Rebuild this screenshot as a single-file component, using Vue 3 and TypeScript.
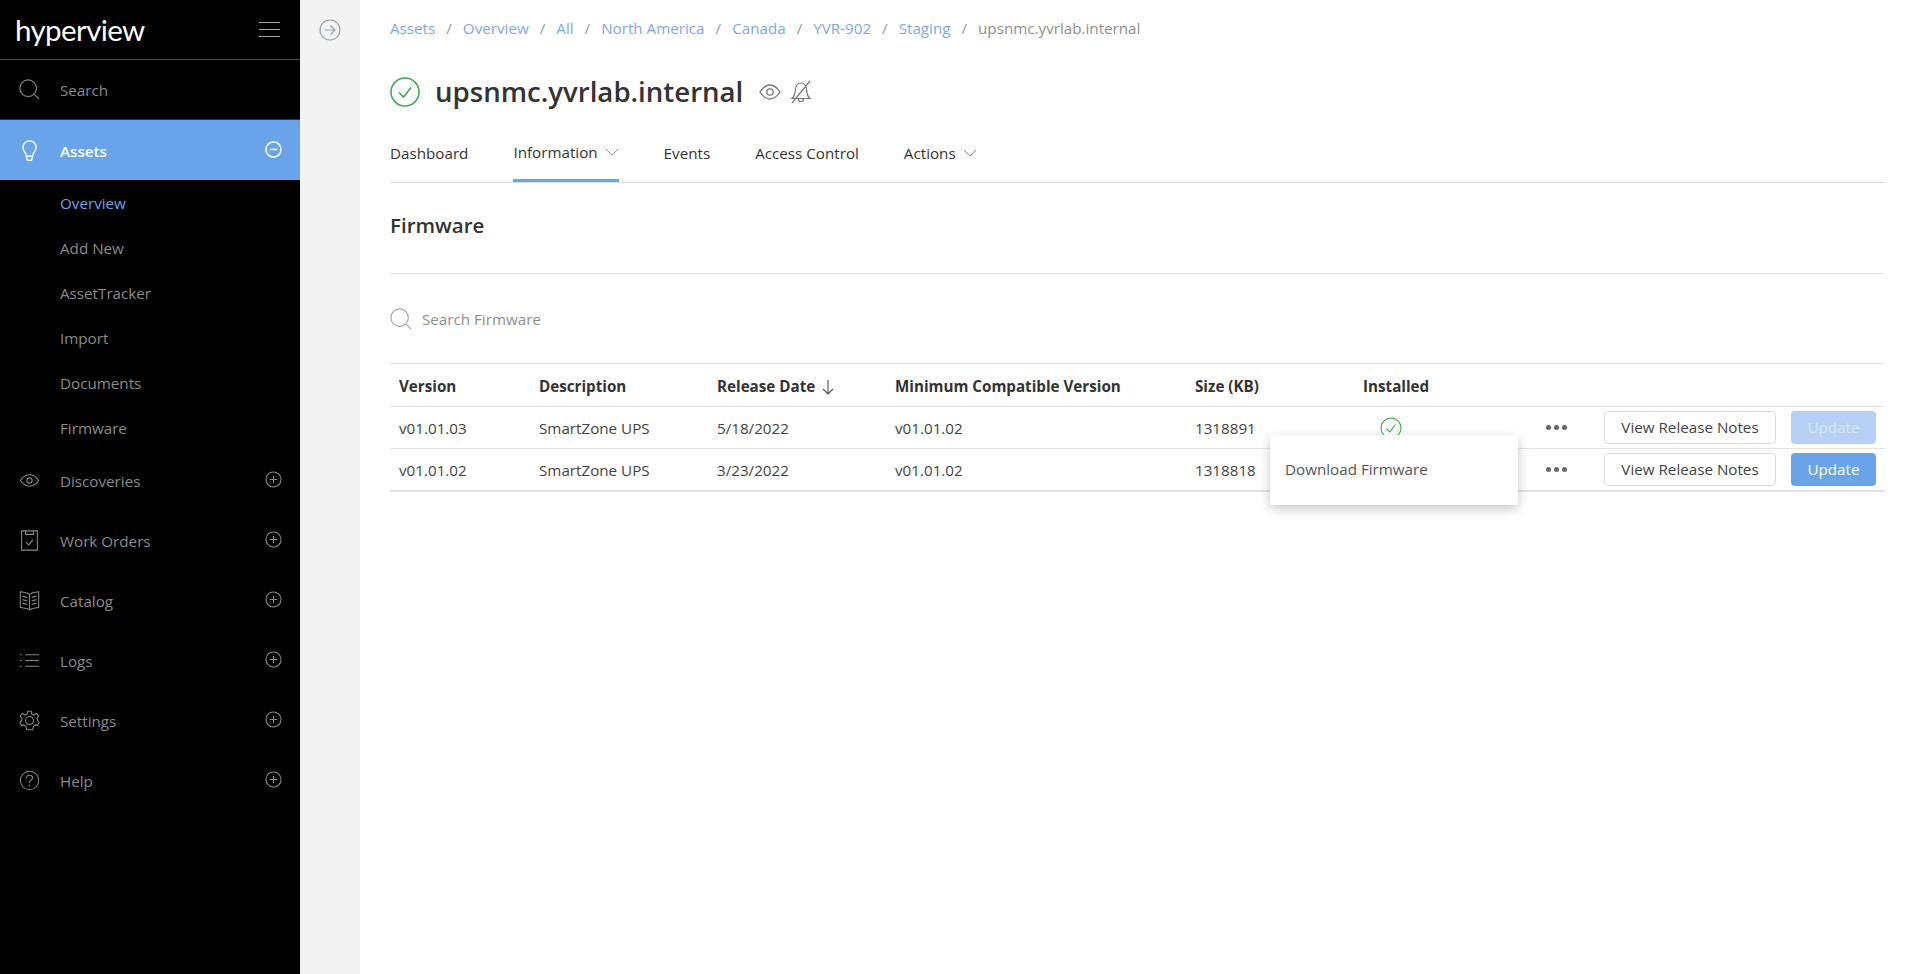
<template>
  <div class="page">
    <aside class="sidebar">
      <div class="logo-row">
        <span class="logo">hyperview</span>
        <div class="burger"><i></i><i></i><i></i></div>
      </div>
      <div class="search-row">
        <svg class="nav-icon" viewBox="0 0 24 24"><circle cx="10.5" cy="10.5" r="9.5" /><path d="M17.5 17.5 L23 23" /></svg>
        <span>Search</span>
      </div>
      <div class="nav-item active">
        <svg class="nav-icon" viewBox="0 0 24 24">
          <path d="M8.5 18.5 C8.5 14.5 4.5 13 4.5 8.5 A7.5 7.5 0 0 1 19.5 8.5 C19.5 13 15.5 14.5 15.5 18.5 Z" />
          <path d="M9 19 V21 A3 2.5 0 0 0 15 21 V19" />
        </svg>
        <span class="nav-label">Assets</span>
        <svg class="pm" viewBox="0 0 18 18"><circle cx="9" cy="9" r="8" /><path d="M5 9 H13" /></svg>
      </div>
      <ul class="sub-nav">
        <li v-for="(s, i) in subItems" :key="s" :class="{ current: i === 0 }">{{ s }}</li>
      </ul>
      <div v-for="item in navItems" :key="item.label" class="nav-item">
        <svg class="nav-icon" viewBox="0 0 24 24">
          <path v-for="d in item.paths" :key="d" :d="d" />
        </svg>
        <span class="nav-label">{{ item.label }}</span>
        <svg class="pm" viewBox="0 0 18 18"><circle cx="9" cy="9" r="8" /><path d="M5 9 H13 M9 5 V13" /></svg>
      </div>
    </aside>

    <div class="strip">
      <svg class="expand" viewBox="0 0 22 22"><circle cx="11" cy="11" r="10" /><path d="M5.5 11 H16 M11.5 6.5 L16 11 L11.5 15.5" /></svg>
    </div>

    <main class="content">
      <nav class="crumbs">
        <template v-for="c in crumbs" :key="c">
          <a>{{ c }}</a><span class="sep">/</span>
        </template>
        <span class="crumb-last">upsnmc.yvrlab.internal</span>
      </nav>

      <div class="title-row">
        <svg class="status" viewBox="0 0 30 30"><circle cx="15" cy="15" r="14" /><path d="M9 15.5 L13.5 20 L21 10.5" /></svg>
        <h1>upsnmc.yvrlab.internal</h1>
        <svg class="t-eye" viewBox="0 0 22 16"><path d="M1 8 C5 2 8 1 11 1 C14 1 17 2 21 8 C17 14 14 15 11 15 C8 15 5 14 1 8 Z" /><circle cx="11" cy="8" r="3.2" /></svg>
        <svg class="t-bell" viewBox="0 0 22 24">
          <path d="M2 18.5 C5 16 5 13 5.5 9 C6 5 8.5 3 11 3 C13.5 3 16 5 16.5 9 C17 13 17 16 20 18.5 Z" />
          <path d="M8.5 19 A2.5 2.5 0 0 0 13.5 19 M2 23 L20 1" />
        </svg>
      </div>

      <div class="tabs">
        <div v-for="t in tabs" :key="t.label" class="tab" :class="{ on: t.on }">
          {{ t.label }}
          <svg v-if="t.menu" class="chev" viewBox="0 0 14 8"><path d="M1 1 L7 7 L13 1" /></svg>
        </div>
      </div>

      <h2>Firmware</h2>

      <div class="fw-search">
        <svg viewBox="0 0 24 24"><circle cx="10.5" cy="10.5" r="9.5" /><path d="M17.5 17.5 L23 23" /></svg>
        <span>Search Firmware</span>
      </div>

      <div class="table-wrap">
        <table>
          <thead>
            <tr>
              <th class="c1">Version</th>
              <th class="c2">Description</th>
              <th class="c3">
                Release Date
                <svg class="sort" viewBox="0 0 12 16"><path d="M6 1 V15 M1 10 L6 15 L11 10" /></svg>
              </th>
              <th class="c4">Minimum Compatible Version</th>
              <th class="c5">Size (KB)</th>
              <th class="c6">Installed</th>
              <th></th>
            </tr>
          </thead>
          <tbody>
            <tr v-for="r in rows" :key="r.version">
              <td>{{ r.version }}</td>
              <td>SmartZone UPS</td>
              <td>{{ r.date }}</td>
              <td>v01.01.02</td>
              <td>{{ r.size }}</td>
              <td>
                <svg v-if="r.installed" class="ok" viewBox="0 0 22 22"><circle cx="11" cy="11" r="10" /><path d="M6.5 11.5 L9.8 14.8 L15.5 7.5" /></svg>
              </td>
              <td>
                <div class="actions">
                  <span class="dots"><i></i><i></i><i></i></span>
                  <button class="btn-notes">View Release Notes</button>
                  <button class="btn-update" :class="{ off: r.installed }">Update</button>
                </div>
              </td>
            </tr>
          </tbody>
        </table>
        <div class="popup">Download Firmware</div>
      </div>
    </main>
  </div>
</template>

<script setup lang="ts">
const subItems = ['Overview', 'Add New', 'AssetTracker', 'Import', 'Documents', 'Firmware']

const navItems: { label: string; paths: string[] }[] = [
  {
    label: 'Discoveries',
    paths: [
      'M1.5 12 C5 7 9 5.5 12 5.5 C15 5.5 19 7 22.5 12 C19 17 15 18.5 12 18.5 C9 18.5 5 17 1.5 12 Z',
      'M12 9 A3 3 0 1 0 12 15 A3 3 0 1 0 12 9 Z',
    ],
  },
  {
    label: 'Work Orders',
    paths: [
      'M3 1 H21 V23 H3 Z',
      'M7.5 1 V5 H16.5 V1',
      'M8 14 L11 17 L16 11',
    ],
  },
  {
    label: 'Catalog',
    paths: [
      'M12 5 C9 3 5 2.5 1.5 2 V20 C5 20.5 9 21 12 22.5 C15 21 19 20.5 22.5 20 V2 C19 2.5 15 3 12 5 Z',
      'M12 5 V22.5',
      'M4 7 L9.5 8.5 M4 11 L9.5 12.5 M4 15 L9.5 16.5',
      'M20 7 L14.5 8.5 M20 11 L14.5 12.5 M20 15 L14.5 16.5',
    ],
  },
  {
    label: 'Logs',
    paths: [
      'M7 5.5 H23 M7 12 H23 M7 18.5 H23',
      'M1 5.5 H3 M1 12 H3 M1 18.5 H3',
    ],
  },
  {
    label: 'Settings',
    paths: [
      'M10 1.5 H14 L14.7 4.7 L17.2 5.8 L20 4 L22.6 7 L20.5 9.5 L21.2 12 L23 14 L21 17.5 L18.2 17 L16.5 19 L15.5 22.5 H9 L7.8 19 L5.5 17 L2.8 17.8 L1 14 L3.2 12 L3.2 9.5 L1.2 7 L4 4 L6.8 5.8 L9.3 4.7 Z',
      'M12 7.5 A4.5 4.5 0 1 0 12 16.5 A4.5 4.5 0 1 0 12 7.5 Z',
    ],
  },
  {
    label: 'Help',
    paths: [
      'M12 1.5 A10.5 10.5 0 1 0 12 22.5 A10.5 10.5 0 1 0 12 1.5 Z',
      'M8.5 9.5 C8.5 7 10 6 12 6 C14 6 15.5 7.2 15.5 9 C15.5 11.5 12 11.5 12 14.5',
      'M12 17 V18.2',
    ],
  },
]

const crumbs = ['Assets', 'Overview', 'All', 'North America', 'Canada', 'YVR-902', 'Staging']

const tabs = [
  { label: 'Dashboard', menu: false, on: false },
  { label: 'Information', menu: true, on: true },
  { label: 'Events', menu: false, on: false },
  { label: 'Access Control', menu: false, on: false },
  { label: 'Actions', menu: true, on: false },
]

const rows = [
  { version: 'v01.01.03', date: '5/18/2022', size: '1318891', installed: true },
  { version: 'v01.01.02', date: '3/23/2022', size: '1318818', installed: false },
]
</script>

<style>
html, body { margin: 0; background: #fff; }
</style>

<style scoped>
.page {
  display: flex;
  height: 974px;
  overflow: hidden;
  font-family: "Open Sans", "Noto Sans", sans-serif;
  font-size: 15.2px;
  color: #333;
}
.sidebar {
  width: 300px;
  flex: none;
  background: #000;
  color: #8a8a8a;
}
.logo-row {
  height: 59px;
  border-bottom: 1px solid #4a4a4a;
  display: flex;
  align-items: center;
  justify-content: space-between;
  padding: 0 20px 0 15px;
}
.logo {
  font-family: Lato, sans-serif;
  font-size: 29.5px;
  font-weight: 400;
  letter-spacing: -0.6px;
  color: #fff;
  line-height: 59px;
}
.burger {
  width: 21px;
  display: flex;
  flex-direction: column;
  gap: 6px;
}
.burger i {
  height: 1px;
  background: #aaa;
}
.search-row {
  height: 59px;
  border-bottom: 1px solid #333;
  display: flex;
  align-items: center;
  padding-left: 19px;
}
.nav-icon {
  width: 21px;
  height: 21px;
  flex: none;
  margin-right: 20px;
  fill: none;
  stroke: #8a8a8a;
  stroke-width: 1.2;
}
.nav-item {
  height: 60px;
  display: flex;
  align-items: center;
  padding: 0 18px 0 19px;
}
.nav-label {
  flex: 1;
  padding-top: 2px;
}
.pm {
  width: 17px;
  height: 17px;
  fill: none;
  stroke: #8a8a8a;
  stroke-width: 1.1;
  margin-top: -2px;
}
.nav-item.active {
  background: #69a3ea;
  color: #fff;
  font-weight: 600;
}
.nav-item.active .nav-icon,
.nav-item.active .pm {
  stroke: #fff;
  stroke-width: 1.6;
}
.sub-nav {
  list-style: none;
  margin: 0;
  padding: 0 0 0 60px;
  height: 270px;
}
.sub-nav li {
  height: 45px;
  line-height: 47px;
}
.sub-nav li.current { color: #69a3ea; }
.strip {
  width: 60px;
  flex: none;
  background: #f3f3f3;
  display: flex;
  justify-content: center;
  padding-top: 19px;
  box-sizing: border-box;
}
.expand {
  width: 22px;
  height: 22px;
  fill: none;
  stroke: #9aa3b0;
  stroke-width: 1.2;
}
.content {
  flex: 1;
  min-width: 0;
  padding: 0 27px 0 30px;
}
.crumbs {
  height: 56px;
  display: flex;
  align-items: center;
  color: #8f8f8f;
}
.crumbs a { color: #7fa8ea; }
.sep { margin: 0 11px; color: #999; }
.crumb-last { color: #8f8f8f; }
.title-row {
  height: 72px;
  display: flex;
  align-items: center;
}
.status {
  width: 30px;
  height: 30px;
  flex: none;
  fill: none;
  stroke: #3daa4e;
  stroke-width: 1.5;
  margin-right: 15px;
}
h1 {
  margin: -2px 0 0;
  font-size: 27.6px;
  font-weight: 600;
  color: #333;
}
.t-eye {
  width: 22px;
  height: 16px;
  margin-left: 16px;
  fill: none;
  stroke: #777;
  stroke-width: 1.3;
}
.t-bell {
  width: 22px;
  height: 24px;
  margin-left: 9px;
  fill: none;
  stroke: #777;
  stroke-width: 1.2;
}
.tabs {
  height: 54px;
  display: flex;
  gap: 45px;
  border-bottom: 1px solid #ddd;
}
.tab {
  height: 54px;
  box-sizing: border-box;
  display: flex;
  align-items: center;
  gap: 7px;
  padding-bottom: 4px;
  color: #333;
}
.tab.on {
  border-bottom: 3px solid #69a3ea;
  padding-bottom: 3px;
}
.chev {
  width: 14px;
  height: 8px;
  fill: none;
  stroke: #999;
  stroke-width: 1;
}
h2 {
  margin: 0;
  height: 90px;
  line-height: 84px;
  font-size: 20.5px;
  font-weight: 600;
  color: #333;
  border-bottom: 1px solid #e3e3e3;
}
.fw-search {
  height: 89px;
  display: flex;
  align-items: center;
  gap: 10px;
  color: #8f8f8f;
}
.fw-search svg {
  width: 22px;
  height: 22px;
  fill: none;
  stroke: #9aa3b0;
  stroke-width: 1.2;
}
.table-wrap { position: relative; }
table {
  width: 100%;
  border-collapse: collapse;
  table-layout: fixed;
  border-top: 1px solid #e3e3e3;
  border-bottom: 2px solid #e3e3e3;
}
th, td {
  padding: 0 0 0 9px;
  text-align: left;
  border-bottom: 1px solid #e3e3e3;
}
tbody tr:last-child td { border-bottom: none; }
th {
  height: 40px;
  padding-top: 2px;
  font-weight: 700;
  color: #333;
}
td { height: 41px; color: #444; }
.c1 { width: 131px; }
.c2 { width: 169px; }
.c3 { width: 169px; }
.c4 { width: 291px; }
.c5 { width: 159px; }
.c6 { width: 169px; }
.sort {
  width: 12px;
  height: 16px;
  margin-left: 3px;
  vertical-align: -3px;
  fill: none;
  stroke: #555;
  stroke-width: 1.1;
}
.ok {
  display: block;
  width: 22px;
  height: 22px;
  margin-left: 17px;
  fill: none;
  stroke: #3daa4e;
  stroke-width: 1.1;
}
.actions {
  display: flex;
  align-items: center;
  justify-content: flex-end;
  padding-right: 9px;
}
.dots {
  display: flex;
  gap: 3px;
  margin-right: 37px;
}
.dots i {
  width: 5px;
  height: 5px;
  border-radius: 50%;
  background: #666;
}
button {
  height: 33px;
  font: inherit;
  border-radius: 4px;
  padding: 0 0 2px;
}
.btn-notes {
  width: 172px;
  background: #fff;
  border: 1px solid #ddd;
  color: #444;
  margin-right: 15px;
}
.btn-update {
  width: 85px;
  background: #69a3ea;
  border: none;
  color: #fff;
}
.btn-update.off { background: #b5d0f4; color: #d8e6f9; }
.popup {
  position: absolute;
  left: 880px;
  top: 72px;
  width: 248px;
  height: 70px;
  box-sizing: border-box;
  padding: 0 15px 2px;
  display: flex;
  align-items: center;
  background: #fff;
  color: #555;
  border-radius: 2px;
  box-shadow: 0 4px 12px rgba(0, 0, 0, 0.22);
}
</style>
